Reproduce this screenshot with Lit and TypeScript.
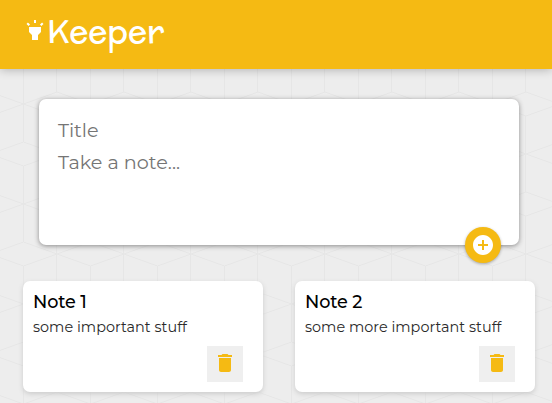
import { LitElement, html, css } from "lit";
import { customElement, property } from "lit/decorators.js";

const ADD = "M12 2C6.48 2 2 6.48 2 12s4.48 10 10 10 10-4.48 10-10S17.52 2 12 2zm5 11h-4v4h-2v-4H7v-2h4V7h2v4h4v2z";
const TRASH = "M6 19c0 1.1.9 2 2 2h8c1.1 0 2-.9 2-2V7H6v12zM19 4h-3.5l-1-1h-5l-1 1H5v2h14V4z";
const TORCH = "M6 14l3 3v5h6v-5l3-3V9H6zM11 2h2v3h-2zM3.5 5.875L4.914 4.46l2.12 2.122L5.62 7.997zM16.96 6.585l2.123-2.12 1.414 1.414L18.375 8z";

@customElement("keeper-note")
class KeeperNote extends LitElement {
  @property() heading = "";
  @property() content = "";

  static styles = css`
    :host {
      display: block;
      box-sizing: border-box;
      width: 240px;
      height: 111px;
      padding: 10px;
      border-radius: 7px;
      background: #fff;
      box-shadow: 0 2px 5px #ccc;
      position: relative;
    }
    h1 {
      margin: 0;
      font-size: 17.6px;
      line-height: 22px;
      font-weight: 500;
      letter-spacing: -0.15px;
      color: #000;
    }
    p {
      margin: 4px 0 0;
      font-size: 14.4px;
      line-height: 20px;
      font-weight: 400;
      letter-spacing: 0.03px;
      color: #2a2a2a;
      white-space: nowrap;
    }
    button {
      display: grid;
      place-items: center;
      width: 36px;
      height: 36px;
      margin: 9px 10px 0 auto;
      padding: 0 0 2px;
      box-sizing: border-box;
      border: 0;
      background: #efefef;
      color: #f5ba13;
    }
    svg { display: block; width: 24px; height: 24px; fill: currentColor; }
  `;

  render() {
    return html`
      <h1>${this.heading}</h1>
      <p>${this.content}</p>
      <button aria-label="Delete"><svg viewBox="0 0 24 24"><path d=${TRASH}></path></svg></button>
    `;
  }
}

@customElement("app-root")
class AppRoot extends LitElement {
  static styles = css`
    :host {
      display: block;
      position: relative;
      height: 403px;
      overflow: hidden;
      background: #ededed;
      font-family: Montserrat, Inter, "Open Sans", sans-serif;
    }
    .texture { position: absolute; inset: 0; width: 100%; height: 100%; }
    .texture path { fill: none; stroke: #e6e6e6; stroke-width: 1; }
    header {
      position: relative;
      display: flex;
      box-sizing: border-box;
      height: 69px;
      padding: 12px 23px 0;
      background: #f5ba13;
      box-shadow: 0 0 10px rgba(0, 0, 0, 0.3);
      color: #fff;
    }
    .torch { width: 24px; height: 24px; margin-top: 6px; fill: currentColor; }
    h1 {
      margin: -1px 0 0;
      font: 400 32px/40px McLaren, Lato, sans-serif;
    }
    form {
      position: relative;
      box-sizing: border-box;
      width: 480px;
      height: 146px;
      margin: 30px 0 0 39px;
      padding: 19px;
      border-radius: 7px;
      background: #fff;
      box-shadow: 0 1px 5px rgb(138, 137, 137);
      color: #757575;
      font-size: 19.2px;
    }
    .field { height: 24px; line-height: 24px; margin-bottom: 8px; }
    .add {
      position: absolute;
      right: 18px;
      bottom: -18px;
      display: grid;
      place-items: center;
      width: 36px;
      height: 36px;
      padding: 0;
      border: 0;
      border-radius: 50%;
      background: #f5ba13;
      color: #fff;
      box-shadow: 0 1px 3px rgba(0, 0, 0, 0.3);
    }
    .add svg { display: block; width: 24px; height: 24px; fill: currentColor; }
    .notes {
      position: relative;
      display: flex;
      gap: 32px;
      margin: 36px 0 0 23px;
    }
    keeper-note { flex: none; }
  `;

  render() {
    return html`
      <svg class="texture">
        <defs>
          <pattern id="cubes" width="67" height="100" patternUnits="userSpaceOnUse" x="23" y="42">
            <path d="M0.5 24V100M33.5 -26V50M33.5 74V100M0.5 0L67.5 24M0.5 24L67.5 0M34 50L0.5 62L-33 74M34 50L67.5 62M34 74L0.5 62M34 74L67.5 62"></path>
          </pattern>
        </defs>
        <rect width="100%" height="100%" fill="url(#cubes)"></rect>
      </svg>
      <header>
        <svg class="torch" viewBox="0 0 24 24"><path d=${TORCH}></path></svg>
        <h1>Keeper</h1>
      </header>
      <form>
        <div class="field title">Title</div>
        <div class="field">Take a note...</div>
        <button class="add" type="button" aria-label="Add"><svg viewBox="0 0 24 24"><path d=${ADD}></path></svg></button>
      </form>
      <div class="notes">
        <keeper-note heading="Note 1" content="some important stuff"></keeper-note>
        <keeper-note heading="Note 2" content="some more important stuff"></keeper-note>
      </div>
    `;
  }
}
